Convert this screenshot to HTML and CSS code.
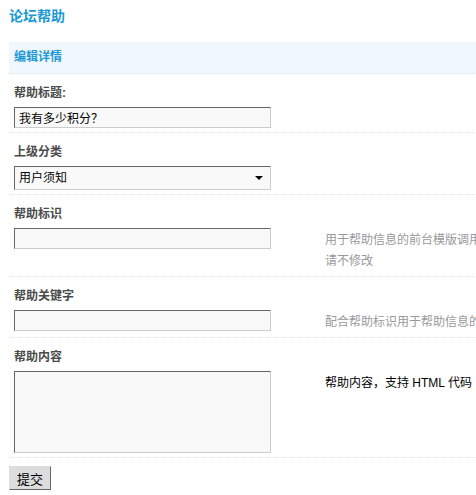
FILE: index.html
```html
<!DOCTYPE html>
<html lang="zh-CN">
<head>
    <meta charset="UTF-8">
    <title>论坛帮助</title>
    <link rel="stylesheet" href="styles.css">
</head>
<body>
    <div class="page">
        <h3 class="page-title">论坛帮助</h3>

        <form class="form">
            <div class="form-head">编辑详情</div>

            <!-- 帮助标题 -->
            <div class="item">
                <div class="label">帮助标题:</div>
                <div class="field">
                    <input class="txt" type="text" value="我有多少积分？">
                </div>
            </div>

            <!-- 上级分类 -->
            <div class="item">
                <div class="label">上级分类</div>
                <div class="field">
                    <span class="select-wrap">
                        <select class="ps">
                            <option>用户须知</option>
                            <option>基本功能操作</option>
                            <option>其他相关问题</option>
                        </select>
                    </span>
                </div>
            </div>

            <!-- 帮助标识 -->
            <div class="item">
                <div class="label">帮助标识</div>
                <div class="field">
                    <input class="txt" type="text">
                    <div class="tips">用于帮助信息的前台模版调用，<br>请不修改</div>
                </div>
            </div>

            <!-- 帮助关键字 -->
            <div class="item">
                <div class="label">帮助关键字</div>
                <div class="field">
                    <input class="txt" type="text">
                    <div class="tips">配合帮助标识用于帮助信息的前台调用</div>
                </div>
            </div>

            <!-- 帮助内容 -->
            <div class="item">
                <div class="label">帮助内容</div>
                <div class="field">
                    <textarea class="area"></textarea>
                    <div class="tips dark">帮助内容，支持 HTML 代码</div>
                </div>
            </div>

            <div class="actions">
                <button type="submit" class="btn">提交</button>
            </div>
        </form>
    </div>
</body>
</html>
```
FILE: styles.css
```css
html, body {
    margin: 0;
    padding: 0;
    overflow: hidden;
    background-color: #fff;
}

body {
    font-family: "Liberation Sans", "Noto Sans CJK SC", sans-serif;
    font-size: 12px;
    color: #000;
}

.page {
    width: 720px;
    padding-left: 9px;
}

.page-title {
    margin: 0 0 18px;
    padding-top: 8px;
    font-size: 14px;
    line-height: 16px;
    font-weight: bold;
    color: #1d9ad6;
}

.form-head {
    padding: 8px 5px 9px;
    line-height: 14px;
    font-weight: bold;
    color: #1d9ad6;
    background-color: #f0f7fd;
    border-bottom: 1px dotted #d6e6f3;
}

.item {
    padding: 12px 0 4px 5px;
    border-bottom: 1px dotted #d6e6f3;
}

.label {
    line-height: 14px;
    font-weight: bold;
    color: #4a4a4a;
    margin-bottom: 7px;
}

.field {
    display: flex;
    align-items: flex-start;
}

.txt,
.area {
    box-sizing: border-box;
    width: 257px;
    margin: 0;
    padding: 0 4px;
    font-family: inherit;
    font-size: 12px;
    background-color: #f9f9f9;
    border: 1px solid;
    border-color: #666 #ccc #ccc #666;
    border-radius: 0;
    flex-shrink: 0;
}

.txt {
    height: 21px;
    line-height: 19px;
}

.area {
    height: 82px;
    resize: none;
}

.select-wrap {
    position: relative;
    display: inline-block;
}

.ps {
    box-sizing: border-box;
    width: 257px;
    height: 24px;
    margin: 0;
    padding: 0 4px;
    font-family: inherit;
    font-size: 12px;
    color: #000;
    background-color: #f9f9f9;
    border: 1px solid;
    border-color: #666 #ccc #ccc #666;
    border-radius: 0;
    -webkit-appearance: none;
    appearance: none;
}

.select-wrap::after {
    content: "";
    position: absolute;
    right: 8px;
    top: 10px;
    border-left: 4px solid transparent;
    border-right: 4px solid transparent;
    border-top: 4px solid #000;
    pointer-events: none;
}

.tips {
    margin-left: 54px;
    padding-top: 2px;
    line-height: 21px;
    color: #999;
    white-space: nowrap;
}

.tips.dark {
    color: #000;
}

.actions {
    padding-top: 8px;
}

.btn {
    height: 24px;
    width: 42px;
    padding: 0;
    font-family: inherit;
    font-size: 13px;
    color: #000;
    background-color: #ddd;
    border: 1px solid;
    border-color: #ddd #666 #666 #ddd;
    cursor: pointer;
}
```
